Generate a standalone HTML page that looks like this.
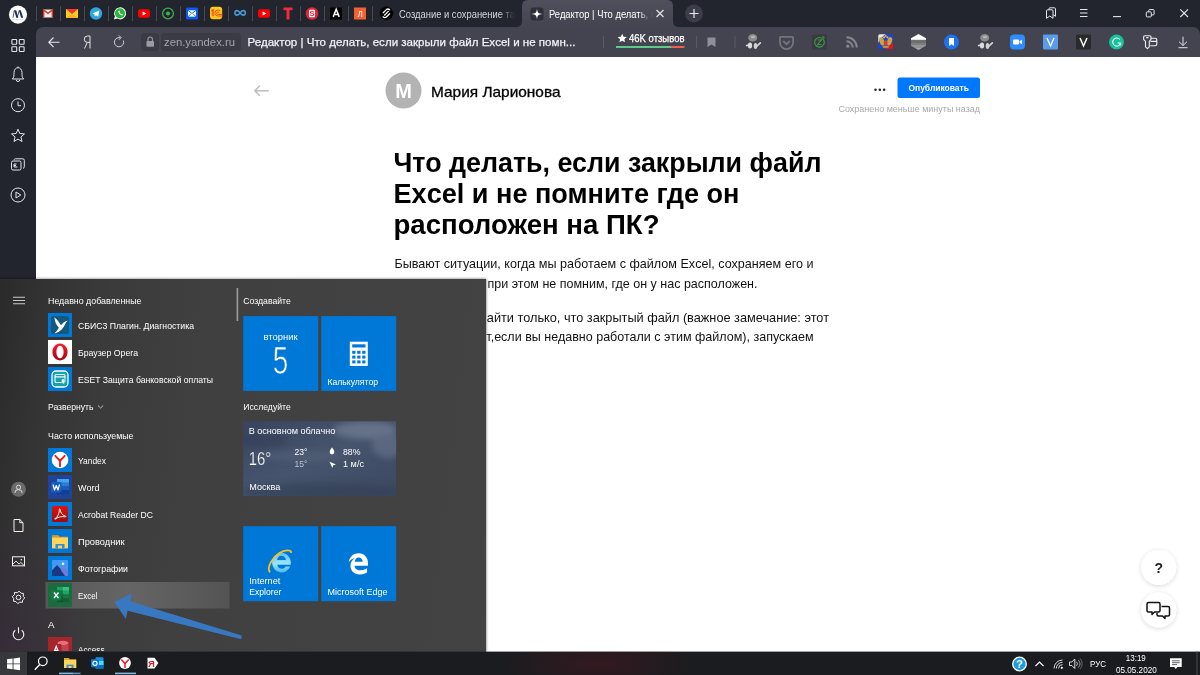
<!DOCTYPE html>
<html><head><meta charset="utf-8"><title>Редактор</title>
<style>
html,body{margin:0;padding:0;width:1200px;height:675px;overflow:hidden;background:#fff;font-family:"Liberation Sans", sans-serif;}
#root{position:relative;width:1200px;height:675px;overflow:hidden;}
.abs{position:absolute;}
svg text{font-family:"Liberation Sans", sans-serif;}
svg{will-change:transform;}

#tabbar{left:0;top:0;width:1200px;height:57px;background:#22242e;}
#side{left:0;top:27px;width:36px;height:252px;background:#22242e;}
#addr{left:36px;top:27px;width:1164px;height:30px;background:#43444f;border-radius:7px 7px 0 0;}
#page{left:36px;top:57px;width:1164px;height:595px;background:#fff;}
#start{left:0;top:279px;width:486px;height:373px;
 background:
  radial-gradient(ellipse 90px 140px at 0px 372px, rgba(58,34,66,.4), rgba(58,34,66,0) 100%),
  linear-gradient(97deg,#2a2a2a 0%,#343434 10%,#3b3b3b 22%,#404040 40%,#434343 100%);
 box-shadow:0 -1px 2px rgba(0,0,0,.22), 1px 0 2px rgba(0,0,0,.25);}
#taskbar{left:0;top:652px;width:1200px;height:23px;background:#191a1d;}

</style></head><body><div id="root">
<div id="tabbar" class="abs"></div><div id="side" class="abs"></div><div id="addr" class="abs"></div><div id="page" class="abs"></div><svg class="abs" style="left:0;top:0" width="1200" height="60" viewBox="0 0 1200 60"><rect x="36.0" y="6" width="1" height="15" fill="#474954"/><rect x="60.0" y="6" width="1" height="15" fill="#474954"/><rect x="84.0" y="6" width="1" height="15" fill="#474954"/><rect x="108.0" y="6" width="1" height="15" fill="#474954"/><rect x="132.0" y="6" width="1" height="15" fill="#474954"/><rect x="156.0" y="6" width="1" height="15" fill="#474954"/><rect x="180.0" y="6" width="1" height="15" fill="#474954"/><rect x="204.0" y="6" width="1" height="15" fill="#474954"/><rect x="228.0" y="6" width="1" height="15" fill="#474954"/><rect x="252.0" y="6" width="1" height="15" fill="#474954"/><rect x="276.0" y="6" width="1" height="15" fill="#474954"/><rect x="300.0" y="6" width="1" height="15" fill="#474954"/><rect x="324.0" y="6" width="1" height="15" fill="#474954"/><rect x="348.0" y="6" width="1" height="15" fill="#474954"/><rect x="372.0" y="6" width="1" height="15" fill="#474954"/><path d="M516 27 Q522 27 522 21 L522 6 Q522 0 528 0 L667 0 Q673 0 673 6 L673 21 Q673 27 679 27 Z" fill="url(#gtab)"/><defs><linearGradient id="gtab" x1="0" y1="0" x2="0" y2="1"><stop offset="0" stop-color="#4f505b"/><stop offset="1" stop-color="#43444f"/></linearGradient></defs><defs><linearGradient id="gfade1" gradientUnits="userSpaceOnUse" x1="399" y1="0" x2="516" y2="0"><stop offset="0" stop-color="#d6d7dc"/><stop offset="0.86" stop-color="#d6d7dc"/><stop offset="0.97" stop-color="#d6d7dc" stop-opacity="0.12"/><stop offset="1" stop-color="#d6d7dc" stop-opacity="0"/></linearGradient></defs><text x="399" y="17.5" font-size="10" fill="url(#gfade1)" font-weight="normal" text-anchor="start" textLength="116" lengthAdjust="spacingAndGlyphs" >Создание и сохранение та</text><defs><linearGradient id="gfade2" gradientUnits="userSpaceOnUse" x1="549" y1="0" x2="654" y2="0"><stop offset="0" stop-color="#fff"/><stop offset="0.86" stop-color="#fff"/><stop offset="0.96" stop-color="#fff" stop-opacity="0.12"/><stop offset="1" stop-color="#fff" stop-opacity="0"/></linearGradient></defs><text x="549" y="17.5" font-size="10" fill="url(#gfade2)" font-weight="normal" text-anchor="start" textLength="107" lengthAdjust="spacingAndGlyphs" >Редактор | Что делать, е</text><path d="M656.5 10 L663.5 17 M663.5 10 L656.5 17" stroke="#e8e8ec" stroke-width="1.1" fill="none"/><circle cx="694" cy="13.5" r="9" fill="#3c3d49"/><path d="M689.5 13.5 H698.5 M694 9 V18" stroke="#e8e8ec" stroke-width="1.2"/><rect x="141" y="33" width="18" height="18" rx="4" fill="#3a3b45"/><rect x="161" y="33" width="80" height="18" rx="4" fill="#3a3b45"/><text x="164" y="46.3" font-size="11.7" fill="#a4a5ad" font-weight="normal" text-anchor="start" textLength="71" lengthAdjust="spacingAndGlyphs" >zen.yandex.ru</text><text x="247.5" y="46.3" font-size="11.7" fill="#f2f2f4" font-weight="normal" text-anchor="start" textLength="328" lengthAdjust="spacingAndGlyphs" stroke="#f2f2f4" stroke-width="0.250">Редактор | Что делать, если закрыли файл Excel и не помн...</text><rect x="603" y="36" width="1" height="12" fill="#5a5b66"/><rect x="696" y="36" width="1" height="12" fill="#5a5b66"/><rect x="734.5" y="36" width="1" height="12" fill="#5a5b66"/><text x="629" y="42.2" font-size="10.3" fill="#ffffff" font-weight="normal" text-anchor="start" textLength="55.5" lengthAdjust="spacingAndGlyphs" stroke="#fff" stroke-width="0.250">46K отзывов</text><rect x="616" y="46" width="55" height="2" fill="#5fc98a"/><rect x="671" y="46" width="13.5" height="2" fill="#f0604d"/></svg><svg class="abs" style="left:0;top:0" width="1200" height="60" viewBox="0 0 1200 60"><circle cx="18" cy="14.600" r="9.100" fill="#fff"/><path d="M13 17.700 L14.300 10.400" stroke="#24365c" stroke-width="0.800" fill="none"/><path d="M14.200 10.300 L16.200 10.300 L18.300 17.700 L16.300 17.700 Z" fill="#1c2e52"/><path d="M17.300 17.700 L19.200 10.400" stroke="#24365c" stroke-width="0.800" fill="none"/><path d="M18.800 10.300 L20.700 10.300 L23.200 17.700 L21.100 17.700 Z" fill="#1c2e52"/><rect x="12.500" y="19" width="11" height="0.500" fill="#c5cde0"/><g transform="translate(0 -0.500)"><rect x="43" y="10" width="10" height="8" fill="#ececec"/><path d="M43.600 18 V10.500 L48 13.900 L52.400 10.500 V18" stroke="#d8382b" stroke-width="1.500" fill="none"/><rect x="66" y="9.500" width="12" height="9" fill="#fdc92c"/><path d="M66 9.500 H78 L72 14.500 Z" fill="#f5322d"/><path d="M66 18.500 L72 14 L78 18.500 Z" fill="#f9b31b"/><circle cx="96" cy="14" r="6.200" fill="#2ea6e0"/><path d="M92.500 14 L99.300 11 L98.200 17.300 L96 15.700 L94.800 17 L94.600 15 Z" fill="#fff"/><path d="M114 20 L114.900 16.800 A6 6 0 1 1 117.200 19.100 Z" fill="#fff"/><circle cx="120" cy="13.800" r="5.100" fill="#2cb742"/><path d="M118 11.500 c0.600 2.200 1.800 3.600 4 4.600 l1 -0.900 l-1.200 -0.900 l-0.600 0.400 c-0.800 -0.500 -1.300 -1.100 -1.700 -1.900 l0.500 -0.600 l-0.800 -1.300 z" fill="#fff"/><rect x="138" y="9.700" width="12" height="8.600" rx="2.300" fill="#ff0000"/><path d="M142.6 11.900 L146.4 14 L142.6 16.100 Z" fill="#fff"/><rect x="258" y="9.700" width="12" height="8.600" rx="2.300" fill="#ff0000"/><path d="M262.6 11.900 L266.4 14 L262.6 16.100 Z" fill="#fff"/><circle cx="168" cy="14" r="5.400" fill="none" stroke="#3fae52" stroke-width="1.300"/><circle cx="168" cy="14" r="2.100" fill="#3fae52"/><rect x="186" y="8" width="12" height="12" rx="1.500" fill="#0a5cf5"/><rect x="188" y="10.800" width="8" height="6.400" fill="#fff"/><path d="M188 10.800 L192 14 L196 10.800 M188 17.200 L190.800 14.500 M196 17.200 L193.200 14.500" stroke="#0a5cf5" stroke-width="0.900" fill="none"/><defs><linearGradient id="g1c" x1="0" y1="0" x2="0" y2="1"><stop offset="0" stop-color="#ffd21a"/><stop offset="0.5" stop-color="#fdb91c"/><stop offset="1" stop-color="#fcc81e"/></linearGradient></defs><rect x="210" y="7.200" width="12.200" height="12.500" rx="3" fill="url(#g1c)"/><path d="M211.500 11.500 L213 10.300 V16.500" stroke="#f0481c" stroke-width="1.300" fill="none"/><path d="M220 11.300 a3 3 0 1 0 -1.500 5.200 H222.200 M218.800 12.800 a1.300 1.300 0 1 0 -0.500 2.200 H222.200" stroke="#f0481c" stroke-width="0.900" fill="none"/><path d="M240.100 13.400 C238.300 10.600 235 10.200 234.900 13.400 C235 16.600 238.300 16.200 240.100 13.400 C241.900 10.600 245.200 10.200 245.300 13.400 C245.200 16.600 241.900 16.200 240.100 13.400 Z" fill="none" stroke="#4a9bdc" stroke-width="1.600"/><path d="M283.500 8 H292.500 V10.800 H289.500 V20 H286.500 V10.800 H283.500 Z" fill="#ee2c3c"/><circle cx="312" cy="14" r="6.300" fill="#e5263a"/><rect x="309" y="10.300" width="6" height="7.400" rx="1" fill="#fff"/><text x="312" y="16.8" font-size="7.5" fill="#e5263a" font-weight="bold" text-anchor="middle" >S</text><rect x="330" y="8" width="12" height="12" fill="#000"/><path d="M333.200 17.400 L336.200 9.800 L339.200 17.400 M334.500 14.900 H337.900" stroke="#fff" stroke-width="1.500" fill="none" stroke-linejoin="miter"/><rect x="354" y="8" width="12" height="12" fill="#f4602f"/><text x="360.2" y="17.3" font-size="8.5" fill="#fff" font-weight="normal" text-anchor="middle" textLength="5" lengthAdjust="spacingAndGlyphs" >Л</text><path d="M386.400 7.300 L391 9.200 L392.900 13.800 L391 18.400 L386.400 20.300 L381.800 18.400 L379.900 13.800 L381.800 9.200 Z" fill="#000" stroke="#000" stroke-width="1" stroke-linejoin="round"/><path d="M383.200 13.300 L386.400 10.100 Q388.100 8.800 389.700 10.300 M389.600 14.300 L386.400 17.500 Q384.700 18.800 383.100 17.300 M384.500 15.700 L388.300 11.900" stroke="#fff" stroke-width="1.250" fill="none" stroke-linecap="round"/></g><rect x="530.500" y="7.500" width="13" height="13" rx="3" fill="#2e2f39"/><path d="M537 8.500 C537.300 12.500 538.500 13.700 542.500 14 C538.500 14.300 537.300 15.500 537 19.500 C536.700 15.500 535.500 14.300 531.500 14 C535.500 13.700 536.700 12.500 537 8.500 Z" fill="#fff"/><g stroke="#e6e6ea" fill="none" stroke-width="1" transform="translate(-1.500 0.300)"><path d="M1048 18 v-7.500 a1 1 0 0 1 1 -1 h4.500 a1 1 0 0 1 1 1 v7.500 l-3.200 -2.300 z"/><path d="M1050.500 9.500 v-1 a1 1 0 0 1 1 -1 h4.500 a1 1 0 0 1 1 1 v7.500 l-2.300 -1.500" /></g><path d="M1080 9.500 h7.500 M1080 13 h7.500 M1080 16.500 h7.500" stroke="#e6e6ea" stroke-width="1"/><path d="M1113 16.600 h8" stroke="#e6e6ea" stroke-width="1.100"/><g stroke="#e6e6ea" fill="none" stroke-width="1"><rect x="1146.300" y="11.900" width="5" height="5" rx="0.800"/><path d="M1148.800 11.900 v-1.500 a0.800 0.800 0 0 1 0.800 -0.800 h3.700 a0.800 0.800 0 0 1 0.800 0.800 v3.700 a0.800 0.800 0 0 1 -0.800 0.800 h-2"/></g><path d="M1180.300 9.300 L1188 17 M1188 9.300 L1180.300 17" stroke="#e6e6ea" stroke-width="1.100"/><rect x="11.9" y="39.5" width="4.800" height="4.800" rx="0.700" fill="none" stroke="#e6e6ea" stroke-width="1.100"/><rect x="19.3" y="39.5" width="4.800" height="4.800" rx="0.700" fill="none" stroke="#e6e6ea" stroke-width="1.100"/><rect x="11.9" y="46.7" width="4.800" height="4.800" rx="0.700" fill="none" stroke="#e6e6ea" stroke-width="1.100"/><rect x="19.3" y="46.7" width="4.800" height="4.800" rx="0.700" fill="none" stroke="#e6e6ea" stroke-width="1.100"/><path d="M49 42.300 H59.500 M53.500 37.500 L48.800 42.300 L53.500 47" stroke="#e6e6ea" stroke-width="1.100" fill="none"/><path d="M90 36 V48.500 M90 36 H87.500 a3.200 3.200 0 0 0 0 6.400 H90 M87.300 42.400 L84.500 48.500" stroke="#e6e6ea" stroke-width="1" fill="none"/><path d="M123.300 40.500 a4.600 4.600 0 1 1 -4.300 -2.900 h1.500 M118.800 35.300 l2.300 2.300 l-2.300 2.300" stroke="#d0d0d6" stroke-width="1" fill="none"/><rect x="146.500" y="41" width="7.500" height="5.800" rx="0.800" fill="#9a9ba3"/><path d="M148 41 v-1.800 a2.200 2.200 0 0 1 4.400 0 v1.800" stroke="#9a9ba3" stroke-width="1.100" fill="none"/><path d="M622.200 33.800 l1.350 2.900 l3.150 0.350 l-2.350 2.150 l0.650 3.100 l-2.800 -1.600 l-2.800 1.600 l0.650 -3.100 l-2.350 -2.150 l3.150 -0.350 z" fill="#fff"/><path d="M707.500 37.500 h8 v9.500 l-4 -2.500 l-4 2.500 z" fill="#8e8f97"/><defs><filter id="fblur" x="-20%" y="-20%" width="140%" height="140%"><feGaussianBlur stdDeviation="0.350"/></filter></defs><g transform="translate(753 42)" filter="url(#fblur)"><ellipse cx="-0.300" cy="-4.200" rx="4.500" ry="3.800" fill="#8c8c8c"/><ellipse cx="0" cy="-5" rx="2.200" ry="1.300" fill="#b5b5b5"/><ellipse cx="-3" cy="3.500" rx="2.200" ry="3" fill="#dadada"/><ellipse cx="2.500" cy="4" rx="1.800" ry="3" fill="#cfcfcf"/><path d="M3.500 4.500 L7.300 0.800" stroke="#d8d8d8" stroke-width="1.700" stroke-linecap="round"/><path d="M-6.300 3.500 L-3.500 3" stroke="#dedede" stroke-width="1.600" stroke-linecap="round"/><path d="M-0.500 1 L-0.500 6" stroke="#43444f" stroke-width="0.600"/></g><g transform="translate(985 42)" filter="url(#fblur)"><ellipse cx="-0.300" cy="-4.200" rx="4.500" ry="3.800" fill="#8c8c8c"/><ellipse cx="0" cy="-5" rx="2.200" ry="1.300" fill="#b5b5b5"/><ellipse cx="-3" cy="3.500" rx="2.200" ry="3" fill="#dadada"/><ellipse cx="2.500" cy="4" rx="1.800" ry="3" fill="#cfcfcf"/><path d="M3.500 4.500 L7.300 0.800" stroke="#d8d8d8" stroke-width="1.700" stroke-linecap="round"/><path d="M-6.300 3.500 L-3.500 3" stroke="#dedede" stroke-width="1.600" stroke-linecap="round"/><path d="M-0.500 1 L-0.500 6" stroke="#43444f" stroke-width="0.600"/></g><path d="M780.900 36.900 h11.200 a1 1 0 0 1 1 1 v4.400 a6.600 6.800 0 0 1 -13.200 0 v-4.400 a1 1 0 0 1 1 -1 z" fill="none" stroke="#74747a" stroke-width="1.800"/><path d="M783.200 41 L786.500 44.200 L789.800 41" fill="none" stroke="#74747a" stroke-width="1.800"/><rect x="812" y="34.500" width="15" height="15" fill="#3a3b41"/><circle cx="819.500" cy="42.300" r="4.800" fill="none" stroke="#3c9a4c" stroke-width="1.100"/><path d="M817.600 40 H821.500 L817.600 44.600 H821.500 M816.300 46.300 L823.300 37.300 M822.300 36.800 h1.700 v1.700" stroke="#3c9a4c" stroke-width="0.900" fill="none"/><g fill="none" stroke="#85868d" stroke-width="2"><path d="M846.500 37.200 a10.300 10.300 0 0 1 10.300 10.300"/><path d="M846.500 41.300 a6.200 6.200 0 0 1 6.200 6.200"/></g><circle cx="847.800" cy="46.200" r="1.600" fill="#85868d"/><defs><clipPath id="ccoa"><rect x="878.250" y="34.250" width="14.750" height="15" rx="1.500"/></clipPath></defs><g clip-path="url(#ccoa)"><rect x="878" y="34" width="15.500" height="15.500" fill="#1846d2"/><path d="M878 34 h8 q-5 3 -8 9 z" fill="#ece7d8"/><path d="M893.500 49.500 v-6.500 q-5 1.500 -8 6.500 z" fill="#e3151a"/><g filter="url(#fblur)"><ellipse cx="881.800" cy="41.300" rx="2.300" ry="4.300" transform="rotate(-18 881.800 41.300)" fill="#c9a548"/><ellipse cx="889.600" cy="41.300" rx="2.300" ry="4.300" transform="rotate(18 889.600 41.300)" fill="#c9a548"/><circle cx="884" cy="37.300" r="1.100" fill="#d9b856"/><circle cx="887.400" cy="37.300" r="1.100" fill="#d9b856"/><circle cx="885.700" cy="36" r="0.900" fill="#d9b856"/><ellipse cx="885.700" cy="46.800" rx="3.300" ry="1.400" fill="#b8923a"/><ellipse cx="885.700" cy="42.800" rx="1.900" ry="2.800" fill="#dc3a30"/></g></g><defs><clipPath id="chex"><path d="M918.500 34 L926 38.200 V45.800 L918.500 50 L911 45.800 V38.200 Z"/></clipPath></defs><g clip-path="url(#chex)"><rect x="910" y="33" width="17" height="7" fill="#fff"/><rect x="910" y="39.800" width="17" height="2.800" fill="#6f6f6f"/><rect x="910" y="42.500" width="17" height="2.700" fill="#7e7e7e"/><rect x="910" y="45" width="17" height="2.600" fill="#959595"/><rect x="910" y="47.500" width="17" height="3" fill="#adadad"/></g><circle cx="951.500" cy="42" r="7.500" fill="#1a73f0"/><path d="M949 38 h5 v8 l-2.500 -1.800 l-2.500 1.800 z" fill="#fff"/><rect x="1010" y="34.500" width="15" height="15" rx="4" fill="#2d8cff"/><rect x="1013" y="39.500" width="6" height="5" rx="1" fill="#fff"/><path d="M1019.500 41.300 L1022 39.800 V44.200 L1019.500 42.700 Z" fill="#fff"/><rect x="1043" y="34.500" width="15" height="15" rx="1" fill="#5a9bea"/><path d="M1047 38 L1050.500 46 L1054 38" stroke="#fff" stroke-width="1.300" fill="none"/><rect x="1076" y="34.500" width="15" height="15" rx="1" fill="#2a2a2a"/><path d="M1080 38 L1083.500 46 L1087 38" stroke="#fff" stroke-width="1.500" fill="none"/><circle cx="1116.500" cy="42" r="7.500" fill="#15c39a"/><path d="M1119.800 39.500 a4 4 0 1 0 0.800 3.500 h-2.800 M1120.600 43 v2.500" stroke="#fff" stroke-width="1.100" fill="none"/><g stroke="#ececf0" fill="none" stroke-width="1.100" stroke-linejoin="round"><path d="M1144.800 35.800 h5 a1.200 1.200 0 0 1 1.200 1.200 v2.300 l-1.700 2 v5.500 l-1.900 1.800 l-1.900 -1.800 v-5.500 l-1.900 -2 v-2.300 a1.200 1.200 0 0 1 1.200 -1.200 z M1146.200 37.600 h2.300"/><path d="M1150.800 38.300 h4.500 a1.500 1.500 0 0 1 1.500 1.500 v4.500 a1.500 1.500 0 0 1 -1.500 1.500 h-5 M1150.500 41.400 h6.300"/></g><path d="M1183 36.700 V45.300 M1179 41.700 L1183 45.500 L1187 41.700 M1178.500 47.700 H1187.500" stroke="#e0e0e4" stroke-width="1" fill="none"/></svg><svg class="abs" style="left:0;top:60px" width="36" height="219" viewBox="0 60 36 219"><path d="M12.300 79 c1.800 -1.500 1.700 -3.500 1.700 -6.500 a4 4.800 0 0 1 8 0 c0 3 -0.100 5 1.700 6.500 z M16.300 79.800 a1.700 1.700 0 0 0 3.400 0 M18 67.700 v-1.300" stroke="#e6e6ea" fill="none" stroke-width="1" stroke-linejoin="round"/><circle cx="18" cy="105.200" r="6.500" stroke="#e6e6ea" fill="none" stroke-width="1"/><path d="M18 101.500 V105.700 H21" stroke="#e6e6ea" fill="none" stroke-width="1"/><path d="M18.00 129.20 L19.82 133.49 L24.47 133.90 L20.95 136.96 L22.00 141.50 L18.00 139.10 L14.00 141.50 L15.05 136.96 L11.53 133.90 L16.18 133.49 Z" stroke="#e6e6ea" fill="none" stroke-width="1" stroke-linejoin="round"/><rect x="11.500" y="161" width="9.500" height="9" rx="1.500" stroke="#e6e6ea" fill="none" stroke-width="1"/><path d="M14 159.800 a1.500 1.500 0 0 1 1.300 -1 h7.500 a1.500 1.500 0 0 1 1.500 1.500 v6.500 a1.500 1.500 0 0 1 -1.300 1.500 M16.500 164 h-2.500 v3 h3.500 M14 165.500 h2" stroke="#e6e6ea" fill="none" stroke-width="1"/><circle cx="18" cy="195" r="7" stroke="#e6e6ea" fill="none" stroke-width="1"/><path d="M16 192 L20.800 195 L16 198 Z" stroke="#e6e6ea" fill="none" stroke-width="1" stroke-linejoin="round"/></svg><svg class="abs" style="left:0;top:57px" width="1200" height="594" viewBox="0 57 1200 594"><path d="M254.800 90.750 H268.700 M259.800 85.700 L254.800 90.750 L259.800 95.800" stroke="#bdbdbd" stroke-width="1.500" fill="none"/><circle cx="403.5" cy="90.5" r="18" fill="#b3b3b3"/><text x="403.5" y="97.5" font-size="20" fill="#ffffff" font-weight="bold" text-anchor="middle" >М</text><text x="431" y="96.5" font-size="15" fill="#000" font-weight="normal" text-anchor="start" textLength="129.5" lengthAdjust="spacingAndGlyphs" stroke="#000" stroke-width="0.3">Мария Ларионова</text><circle cx="875.5" cy="89.700" r="1.250" fill="#222"/><circle cx="879.800" cy="89.700" r="1.250" fill="#222"/><circle cx="884.100" cy="89.700" r="1.250" fill="#222"/><rect x="897.5" y="77.5" width="82.5" height="20.5" rx="2.5" fill="#0077ff"/><text x="938.7" y="91" font-size="9.5" fill="#fff" font-weight="bold" text-anchor="middle" textLength="60.5" lengthAdjust="spacingAndGlyphs" >Опубликовать</text><text x="838.5" y="111.5" font-size="8.8" fill="#a8a8a8" font-weight="normal" text-anchor="start" textLength="141.5" lengthAdjust="spacingAndGlyphs" >Сохранено меньше минуты назад</text><text x="393.5" y="172" font-size="28" fill="#000" font-weight="bold" text-anchor="start" textLength="428" lengthAdjust="spacingAndGlyphs" >Что делать, если закрыли файл</text><text x="393.5" y="203" font-size="28" fill="#000" font-weight="bold" text-anchor="start" textLength="346" lengthAdjust="spacingAndGlyphs" >Excel и не помните где он</text><text x="393.5" y="234" font-size="28" fill="#000" font-weight="bold" text-anchor="start" textLength="266" lengthAdjust="spacingAndGlyphs" >расположен на ПК?</text><text x="394.5" y="268" font-size="13.5" fill="#111" font-weight="normal" text-anchor="start" textLength="419" lengthAdjust="spacingAndGlyphs" >Бывают ситуации, когда мы работаем с файлом Excel, сохраняем его и</text><text x="487.5" y="287.5" font-size="13.5" fill="#111" font-weight="normal" text-anchor="start" textLength="270" lengthAdjust="spacingAndGlyphs" >при этом не помним, где он у нас расположен.</text><text x="486.8" y="321.7" font-size="13.5" fill="#111" font-weight="normal" text-anchor="start" textLength="342.2" lengthAdjust="spacingAndGlyphs" >айти только, что закрытый файл (важное замечание: этот</text><text x="486.3" y="341.2" font-size="13.5" fill="#111" font-weight="normal" text-anchor="start" textLength="327.3" lengthAdjust="spacingAndGlyphs" >т,если вы недавно работали с этим файлом), запускаем</text><defs><filter id="fsh" x="-30%" y="-30%" width="160%" height="160%"><feGaussianBlur in="SourceAlpha" stdDeviation="2.5"/><feOffset dy="1"/><feComponentTransfer><feFuncA type="linear" slope="0.16"/></feComponentTransfer><feMerge><feMergeNode/><feMergeNode in="SourceGraphic"/></feMerge></filter></defs><circle cx="1158.7" cy="567.5" r="17.5" fill="#fff" filter="url(#fsh)"/><circle cx="1158.7" cy="610" r="17.5" fill="#fff" filter="url(#fsh)"/><text x="1158.7" y="572.5" font-size="14" fill="#222" font-weight="bold" text-anchor="middle" >?</text><path d="M1148.5 602.5 h10 a1.5 1.5 0 0 1 1.5 1.5 v6.5 a1.5 1.5 0 0 1 -1.5 1.5 h-4 l-2.5 2.5 v-2.5 h-3.5 a1.5 1.5 0 0 1 -1.5 -1.5 v-6.500 a1.5 1.5 0 0 1 1.500 -1.500 z" fill="#fff" stroke="#111" stroke-width="1.5" stroke-linejoin="round"/><path d="M1161.5 606.500 h6.500 a1.5 1.5 0 0 1 1.5 1.5 v6.500 a1.5 1.5 0 0 1 -1.5 1.5 h-3 v2.500 l-2.500 -2.500 h-4 a1.5 1.5 0 0 1 -1.5 -1.5 v-1.500" fill="none" stroke="#111" stroke-width="1.5" stroke-linejoin="round"/></svg><div id="start" class="abs"></div><svg class="abs" style="left:0;top:270px" width="500" height="381" viewBox="0 270 500 381"><defs>
<linearGradient id="ghl" x1="0" y1="0" x2="1" y2="0"><stop offset="0" stop-color="#575757"/><stop offset="0.45" stop-color="#656565"/><stop offset="1" stop-color="#545454"/></linearGradient>
<linearGradient id="gacro" x1="0" y1="0" x2="0" y2="1"><stop offset="0" stop-color="#e01410"/><stop offset="1" stop-color="#9c0b09"/></linearGradient>
<linearGradient id="gopera" x1="0" y1="0" x2="0" y2="1"><stop offset="0" stop-color="#ff1b2d"/><stop offset="1" stop-color="#a70014"/></linearGradient>
<linearGradient id="gphoto" x1="0" y1="0" x2="0" y2="1"><stop offset="0" stop-color="#3d9bf2"/><stop offset="1" stop-color="#5a8ff0"/></linearGradient>
<linearGradient id="gweather" x1="0" y1="0" x2="1" y2="1"><stop offset="0" stop-color="#39455e"/><stop offset="0.5" stop-color="#47546d"/><stop offset="1" stop-color="#3c4861"/></linearGradient>
<filter id="blur3"><feGaussianBlur stdDeviation="3"/></filter>
<filter id="blur1"><feGaussianBlur stdDeviation="0.6"/></filter>
<clipPath id="cweather"><rect x="243.200" y="421.300" width="153" height="74.700"/></clipPath>
<clipPath id="cstart"><rect x="0" y="279" width="486" height="372.600"/></clipPath>
</defs><rect x="13" y="296.8" width="12" height="0.800" fill="#f0f0f0"/><rect x="13" y="300.1" width="12" height="0.800" fill="#f0f0f0"/><rect x="13" y="303.40000000000003" width="12" height="0.800" fill="#f0f0f0"/><rect x="236.6" y="288" width="1.6" height="33" fill="#9c9c9c"/><text x="48" y="303.5" font-size="9.2" fill="#fff" font-weight="normal" text-anchor="start" textLength="93.5" lengthAdjust="spacingAndGlyphs" >Недавно добавленные</text><text x="48" y="410.3" font-size="9.2" fill="#fff" font-weight="normal" text-anchor="start" textLength="45.5" lengthAdjust="spacingAndGlyphs" >Развернуть</text><path d="M98 405.500 L100.600 408 L103.200 405.500" stroke="#ddd" stroke-width="0.8" fill="none"/><text x="48" y="438.5" font-size="9.2" fill="#fff" font-weight="normal" text-anchor="start" textLength="85.5" lengthAdjust="spacingAndGlyphs" >Часто используемые</text><text x="48" y="628" font-size="9.7" fill="#fff" font-weight="normal" text-anchor="start" textLength="6.5" lengthAdjust="spacingAndGlyphs" >A</text><rect x="45.5" y="582" width="184" height="26.500" fill="url(#ghl)"/><g clip-path="url(#cstart)"><rect x="48" y="313" width="24" height="24" fill="#0078d7"/><rect x="51" y="316" width="18" height="18" rx="2.5" fill="#14587c"/><path d="M54.300 317.3 C57 319.5 59.500 322.5 61 325.3 C62.500 323 65 321 67.700 320.5 C66 322.5 64.800 325 63.300 327.5 C61 330.8 57.500 332.8 54.300 333.5 C56.500 331.5 58 329.5 58.800 327.5 C56.300 325.5 54.800 321.5 54.300 317.3 Z" fill="#fff"/><text x="78" y="328.8" font-size="9.2" fill="#fff" font-weight="normal" text-anchor="start" textLength="116" lengthAdjust="spacingAndGlyphs" >СБИС3 Плагин. Диагностика</text><rect x="48" y="340" width="24" height="24" fill="#ffffff"/><path fill-rule="evenodd" d="M60 343.5 a7.600 8.500 0 1 0 0.010 0 Z M60 345.7 a3.600 6.300 0 1 1 -0.010 0 Z" fill="url(#gopera)"/><text x="78" y="355.8" font-size="9.2" fill="#fff" font-weight="normal" text-anchor="start" textLength="60" lengthAdjust="spacingAndGlyphs" >Браузер Opera</text><rect x="48" y="367" width="24" height="24" fill="#0078d7"/><rect x="52" y="371" width="16" height="16" rx="4" fill="#12a3ad" stroke="#fff" stroke-width="1.300"/><rect x="55" y="374.5" width="10" height="8" rx="1.300" fill="none" stroke="#fff" stroke-width="1.100"/><rect x="55" y="376.3" width="10" height="1.200" fill="#fff"/><path d="M61.500 379 h3.500 v2.500 q-0.500 2 -1.750 2.500 q-1.250 -0.500 -1.750 -2.500 z" fill="#fff" stroke="#12a3ad" stroke-width="0.600"/><text x="78" y="382.8" font-size="9.2" fill="#fff" font-weight="normal" text-anchor="start" textLength="135" lengthAdjust="spacingAndGlyphs" >ESET Защита банковской оплаты</text><rect x="48" y="448" width="24" height="24" fill="#0078d7"/><circle cx="60" cy="460" r="8.300" fill="#fff"/><path d="M55.300 455.8 L60 460.8 L64.700 455.8 M60 460.5 V466.3" stroke="#e61e25" stroke-width="1.900" fill="none" stroke-linecap="round"/><text x="78" y="463.8" font-size="9.2" fill="#fff" font-weight="normal" text-anchor="start" textLength="28" lengthAdjust="spacingAndGlyphs" >Yandex</text><rect x="48" y="475" width="24" height="24" fill="#1e439b"/><rect x="57" y="479.0" width="12" height="3.850" fill="#41a5ee"/><rect x="57" y="482.75" width="12" height="3.850" fill="#2b7cd3"/><rect x="57" y="486.5" width="12" height="3.850" fill="#185abd"/><rect x="57" y="490.25" width="12" height="3.850" fill="#103f91"/><rect x="51" y="482" width="10.500" height="10.500" rx="1" fill="#185abd"/><path d="M53 484.5 L54.500 490 L56.250 485.5 L58 490 L59.500 484.5" stroke="#fff" stroke-width="1.200" fill="none" stroke-linejoin="round"/><text x="78" y="490.8" font-size="9.2" fill="#fff" font-weight="normal" text-anchor="start" textLength="21.5" lengthAdjust="spacingAndGlyphs" >Word</text><rect x="48" y="502" width="24" height="24" fill="#0078d7"/><rect x="52" y="506" width="16" height="16" rx="1.800" fill="url(#gacro)"/><path d="M55 518.5 C57.500 517.5 59.500 513 59.300 509.5 C59.200 508.5 60.300 508.5 60.300 509.8 C60.300 512.5 62.500 515.5 65.300 516 C66.200 516.2 66 517 65 516.8 C62 516.2 58.500 516.8 55.500 519 C54.800 519.5 54.300 518.8 55 518.5 Z" fill="none" stroke="#fff" stroke-width="0.950"/><text x="78" y="517.8" font-size="9.2" fill="#fff" font-weight="normal" text-anchor="start" textLength="75" lengthAdjust="spacingAndGlyphs" >Acrobat Reader DC</text><rect x="48" y="529" width="24" height="24" fill="#0078d7"/><path d="M52 535.3 h6.200 l1.200 1.500 h8.600 v11.500 h-16 z" fill="#e9a52b"/><rect x="52" y="535.3" width="6.500" height="1.300" fill="#d88f1c"/><rect x="52" y="537.8" width="16" height="10.500" fill="#ffd55c"/><path d="M55.500 548.3 v-4.300 h9 v4.300 z" fill="#3a8ad8"/><rect x="58" y="545.6" width="4" height="2.700" fill="#ffd55c"/><text x="78" y="544.8" font-size="9.2" fill="#fff" font-weight="normal" text-anchor="start" textLength="46.5" lengthAdjust="spacingAndGlyphs" >Проводник</text><rect x="48" y="556" width="24" height="24" fill="#0078d7"/><rect x="52" y="560" width="16" height="16" rx="1" fill="url(#gphoto)"/><path d="M52 576 v-5.500 l5 -5.500 l7.500 8 l3.500 3 z" fill="#16397f"/><path d="M60.500 569.8 l3 -2.600 l4.500 4.300 v4.500 h-3 z" fill="#6f79dd"/><circle cx="63" cy="563.8" r="1.300" fill="#fff"/><text x="78" y="571.8" font-size="9.2" fill="#fff" font-weight="normal" text-anchor="start" textLength="50" lengthAdjust="spacingAndGlyphs" >Фотографии</text><rect x="48" y="583" width="24" height="24" fill="#1a6b3e"/><rect x="57" y="587.0" width="6" height="3.850" fill="#21a366"/><rect x="63" y="587.0" width="6" height="3.850" fill="#33c481"/><rect x="57" y="590.75" width="6" height="3.850" fill="#107c41"/><rect x="63" y="590.75" width="6" height="3.850" fill="#21a366"/><rect x="57" y="594.5" width="6" height="3.850" fill="#185c37"/><rect x="63" y="594.5" width="6" height="3.850" fill="#107c41"/><rect x="57" y="598.25" width="6" height="3.850" fill="#144f2f"/><rect x="63" y="598.25" width="6" height="3.850" fill="#185c37"/><rect x="51" y="590" width="10.500" height="10.500" rx="1" fill="#107c41"/><path d="M54 592.5 L58.500 598 M58.500 592.5 L54 598" stroke="#fff" stroke-width="1.400" fill="none"/><text x="78" y="598.8" font-size="9.2" fill="#fff" font-weight="normal" text-anchor="start" textLength="19.5" lengthAdjust="spacingAndGlyphs" >Excel</text><rect x="48" y="637" width="24" height="24" fill="#a4262c"/><ellipse cx="63" cy="643" rx="5.500" ry="2.200" fill="#e8707a"/><path d="M57.500 643 v10 a5.500 2.200 0 0 0 11 0 v-10 a5.500 2.200 0 0 1 -11 0" fill="#c4424f"/><rect x="51" y="644" width="10.500" height="10.500" rx="1" fill="#a4262c"/><path d="M53.800 652.3 L56.250 646.3 L58.700 652.3 M54.700 650.3 H57.800" stroke="#fff" stroke-width="1.200" fill="none"/><text x="78" y="652.8" font-size="9.2" fill="#fff" font-weight="normal" text-anchor="start" textLength="26.5" lengthAdjust="spacingAndGlyphs" >Access</text></g><circle cx="18.500" cy="489.200" r="7.500" fill="#6b6b6b"/><circle cx="18.500" cy="487.300" r="2.100" fill="none" stroke="#e8e8e8" stroke-width="0.900"/><path d="M14.800 493 a3.700 3.400 0 0 1 7.400 0" fill="none" stroke="#e8e8e8" stroke-width="0.900"/><path d="M14 519.500 h5.800 l3.200 3.200 v8.800 h-9 z M19.800 519.500 v3.200 h3.200" fill="none" stroke="#f2f2f2" stroke-width="1"/><rect x="12.500" y="556.800" width="12" height="9" fill="none" stroke="#f2f2f2" stroke-width="1"/><path d="M12.500 564.500 l3.500 -3.500 l3 3 l1.800 -1.500 l3.700 3.300" fill="none" stroke="#f2f2f2" stroke-width="0.900"/><circle cx="21.300" cy="559.700" r="0.800" fill="#f2f2f2"/><path d="M24.77 598.01 L22.57 600.12 L22.51 602.26 L19.46 602.21 L17.89 603.67 L15.78 601.47 L13.64 601.41 L13.69 598.36 L12.23 596.79 L14.43 594.68 L14.49 592.54 L17.54 592.59 L19.11 591.13 L21.22 593.33 L23.36 593.39 L23.31 596.44 Z" fill="none" stroke="#f2f2f2" stroke-width="1" stroke-linejoin="round"/><circle cx="18.500" cy="597.400" r="2.300" fill="none" stroke="#f2f2f2" stroke-width="1"/><path d="M15.300 630.200 a5.300 5.300 0 1 0 6.400 0" fill="none" stroke="#f2f2f2" stroke-width="1.100"/><path d="M18.500 627.300 v6" stroke="#f2f2f2" stroke-width="1.100"/><text x="243.3" y="304" font-size="9.2" fill="#fff" font-weight="normal" text-anchor="start" textLength="47.5" lengthAdjust="spacingAndGlyphs" >Создавайте</text><text x="243.3" y="409.5" font-size="9.2" fill="#fff" font-weight="normal" text-anchor="start" textLength="47.5" lengthAdjust="spacingAndGlyphs" >Исследуйте</text><rect x="243.200" y="316.100" width="75" height="74.800" fill="#0078d7"/><rect x="321.200" y="316.100" width="75" height="74.800" fill="#0078d7"/><text x="280.5" y="340" font-size="9.5" fill="#fff" font-weight="normal" text-anchor="middle" textLength="34" lengthAdjust="spacingAndGlyphs" >вторник</text><text x="280.5" y="374.2" font-size="38.5" fill="#fff" font-weight="normal" text-anchor="middle" textLength="15.5" lengthAdjust="spacingAndGlyphs" stroke="#0078d7" stroke-width="0.700">5</text><rect x="349.800" y="341.700" width="18" height="24.200" fill="#fff"/><rect x="352.200" y="344.300" width="13.300" height="3.200" fill="#0078d7"/><rect x="352.20" y="350.80" width="3.300" height="3" fill="#0078d7"/><rect x="357.20" y="350.80" width="3.300" height="3" fill="#0078d7"/><rect x="362.20" y="350.80" width="3.300" height="3" fill="#0078d7"/><rect x="352.20" y="355.60" width="3.300" height="3" fill="#0078d7"/><rect x="357.20" y="355.60" width="3.300" height="3" fill="#0078d7"/><rect x="362.20" y="355.60" width="3.300" height="3" fill="#0078d7"/><rect x="352.20" y="360.40" width="3.300" height="3" fill="#0078d7"/><rect x="357.20" y="360.40" width="3.300" height="3" fill="#0078d7"/><rect x="362.20" y="360.40" width="3.300" height="3" fill="#0078d7"/><text x="327.5" y="385" font-size="9.2" fill="#fff" font-weight="normal" text-anchor="start" textLength="50.5" lengthAdjust="spacingAndGlyphs" >Калькулятор</text><g clip-path="url(#cweather)"><rect x="243" y="421" width="153" height="75" fill="url(#gweather)"/><g filter="url(#blur3)" opacity="0.600"><ellipse cx="365" cy="430" rx="32" ry="9" fill="#7a879d"/><ellipse cx="388" cy="446" rx="16" ry="12" fill="#6a778f"/><ellipse cx="300" cy="456" rx="45" ry="5" fill="#56637c"/><ellipse cx="262" cy="440" rx="25" ry="8" fill="#34405a"/><ellipse cx="320" cy="492" rx="80" ry="9" fill="#333f57"/></g></g><text x="248.7" y="434" font-size="9.2" fill="#fff" font-weight="normal" text-anchor="start" textLength="86.5" lengthAdjust="spacingAndGlyphs" >В основном облачно</text><text x="248.7" y="465" font-size="18.3" fill="#fff" font-weight="normal" text-anchor="start" textLength="22.5" lengthAdjust="spacingAndGlyphs" stroke="#46536c" stroke-width="0.250">16°</text><text x="294.5" y="454.5" font-size="9.2" fill="#fff" font-weight="normal" text-anchor="start" textLength="13" lengthAdjust="spacingAndGlyphs" >23°</text><text x="294.5" y="466.8" font-size="9.2" fill="#b9c1d0" font-weight="normal" text-anchor="start" textLength="13" lengthAdjust="spacingAndGlyphs" >15°</text><path d="M332 447.300 c1.300 2 2.300 3.300 2.300 4.800 a2.300 2.300 0 0 1 -4.600 0 c0 -1.500 1 -2.800 2.300 -4.800 z" fill="#fff"/><text x="343" y="454.5" font-size="9.2" fill="#fff" font-weight="normal" text-anchor="start" textLength="17.5" lengthAdjust="spacingAndGlyphs" >88%</text><path d="M329.500 461.800 l6.500 2.700 l-2.800 0.800 l-0.800 2.800 z" fill="#fff"/><text x="343" y="467" font-size="9.2" fill="#fff" font-weight="normal" text-anchor="start" textLength="21" lengthAdjust="spacingAndGlyphs" >1 м/с</text><text x="249.3" y="490.3" font-size="9.2" fill="#fff" font-weight="normal" text-anchor="start" textLength="31" lengthAdjust="spacingAndGlyphs" >Москва</text><rect x="243.200" y="526.200" width="75" height="75" fill="#0078d7"/><rect x="321.200" y="526.200" width="75" height="75" fill="#0078d7"/><text x="249.3" y="583.5" font-size="9.2" fill="#fff" font-weight="normal" text-anchor="start" textLength="31" lengthAdjust="spacingAndGlyphs" >Internet</text><text x="249.3" y="595.3" font-size="9.2" fill="#fff" font-weight="normal" text-anchor="start" textLength="32" lengthAdjust="spacingAndGlyphs" >Explorer</text><text x="327.4" y="595.3" font-size="9.2" fill="#fff" font-weight="normal" text-anchor="start" textLength="60" lengthAdjust="spacingAndGlyphs" >Microsoft Edge</text><defs><linearGradient id="gie" x1="0" y1="0" x2="0" y2="1"><stop offset="0" stop-color="#5cc3f5"/><stop offset="0.55" stop-color="#9be4fb"/><stop offset="1" stop-color="#4db8ee"/></linearGradient></defs><g transform="translate(281.500 561.800) scale(1.040)"><path d="M-9 1.500 a9 9.300 0 1 1 17.800 1.300 h-12.800 a4.300 4.300 0 0 0 8 1.700 h4.300 a9 9.300 0 0 1 -17.300 -3 z M-4.200 -1.700 h8.400 a4.200 4.200 0 0 0 -8.400 0 z" fill="url(#gie)" fill-rule="evenodd"/><path d="M-11.500 9.500 C-14 5 -9 -4 -2 -8.300 C3.500 -11.800 8.500 -11.500 9.300 -9.300" fill="none" stroke="#f5c12a" stroke-width="1.800" stroke-linecap="round"/></g><g transform="translate(358.300 563.800) scale(0.920)"><path d="M-10.500 -1.500 C-9.500 -8 -5 -11.500 0.500 -11.500 C7 -11.500 10.500 -6.500 10.500 -1 V2 H-4 C-4 5 -1.500 7 2 7 C5 7 7.500 6 9.500 4.800 V9.500 C7 11 4.500 11.500 1.500 11.500 C-4.500 11.500 -8.500 7.500 -8.500 2 C-8.500 -1.500 -6.500 -4.500 -3.800 -6 C-7 -5.500 -9.500 -3.500 -10.500 -1.500 Z M-3.800 -2.300 H4.700 C4.700 -5 3 -6.800 0.500 -6.800 C-2 -6.800 -3.500 -4.800 -3.800 -2.300 Z" fill="#fff" fill-rule="evenodd"/></g><path d="M114.300 602.100 L131.700 593.500 L130.200 601.200 L241.700 635.600 L241.300 639.300 L127.600 610.700 L125.800 619 Z" fill="#3878c0"/></svg><div id="taskbar" class="abs"></div><svg class="abs" style="left:0;top:645px" width="1200" height="30" viewBox="0 645 1200 30"><rect x="0" y="651.600" width="1200" height="23.400" fill="#1b1c1f"/><defs><radialGradient id="gtb" gradientUnits="userSpaceOnUse" cx="598" cy="664" r="95" gradientTransform="translate(0 464.800) scale(1 0.300)"><stop offset="0" stop-color="#5a1522" stop-opacity="0.380"/><stop offset="1" stop-color="#5a1522" stop-opacity="0"/></radialGradient></defs><rect x="480" y="651.600" width="240" height="23.400" fill="url(#gtb)"/><rect x="0" y="651.600" width="27" height="23.400" fill="#37383b"/><path d="M7 659.300 L12.600 658.500 V663.400 H7 Z M13.500 658.400 L20 657.500 V663.400 H13.500 Z M7 664.300 H12.600 V669.200 L7 668.400 Z M13.500 664.300 H20 V670.200 L13.500 669.300 Z" fill="#fff"/><circle cx="42.800" cy="661.300" r="4.300" fill="none" stroke="#fff" stroke-width="1.200"/><path d="M39.800 664.500 L34.800 669.800" stroke="#fff" stroke-width="1.300"/><path d="M64 658 h4.800 l1 1.200 h6.400 v8.800 h-12.200 z" fill="#e9a52b"/><rect x="64" y="660" width="12.200" height="8" fill="#ffd55c"/><path d="M66.500 668 v-3.300 h7 v3.300 z" fill="#3a8ad8"/><rect x="68.500" y="666" width="3" height="2" fill="#ffd55c"/><rect x="59" y="672.600" width="14" height="1.600" fill="#76b9ed"/><rect x="73" y="672.600" width="7.500" height="1.600" fill="#5b8fb8"/><rect x="95.500" y="657.300" width="8" height="11.500" rx="0.800" fill="#1490df"/><rect x="99" y="661" width="4.500" height="4" fill="#50d9ff"/><rect x="95.500" y="665" width="8" height="3.800" fill="#0f6cbd"/><rect x="91" y="659.300" width="8" height="8" rx="0.800" fill="#0f78d4"/><circle cx="95" cy="663.300" r="2.100" fill="none" stroke="#fff" stroke-width="1.100"/><circle cx="125" cy="663" r="5.900" fill="#fff"/><path d="M121.700 660 L125 663.600 L128.300 660 M125 663.400 V667.500" stroke="#e61e25" stroke-width="1.500" fill="none" stroke-linecap="round"/><rect x="115" y="672.600" width="21" height="1.600" fill="#76b9ed"/><path d="M147.500 657.800 h7 l3.800 5.300 l-3.800 5.300 h-7 z" fill="#fff"/><text x="151.3" y="666.8" font-size="9.5" fill="#e61e25" font-weight="bold" text-anchor="middle" >Я</text><circle cx="1019.500" cy="664" r="6.800" fill="#1e9be0" stroke="#fff" stroke-width="1.300"/><text x="1019.5" y="668.3" font-size="11.5" fill="#fff" font-weight="bold" text-anchor="middle" >?</text><path d="M1035.500 666 L1039.500 662 L1043.500 666" stroke="#fff" stroke-width="1.100" fill="none"/><g fill="none" stroke="#d8d8d8" stroke-width="1"><path d="M1054 668.500 a8.500 8.500 0 0 1 8.500 -8.500"/><path d="M1056.300 668.500 a6.200 6.200 0 0 1 6.200 -6.200"/><path d="M1058.600 668.500 a3.900 3.900 0 0 1 3.900 -3.900"/></g><circle cx="1061.800" cy="667.800" r="1.100" fill="#fff"/><path d="M1069.500 662 h2.300 l3 -3 v9.500 l-3 -3 h-2.300 z" fill="none" stroke="#f0f0f0" stroke-width="0.900"/><path d="M1076.500 661.800 a2.800 2.800 0 0 1 0 4" fill="none" stroke="#f0f0f0" stroke-width="0.800"/><path d="M1078.300 660 a5 5 0 0 1 0 7.500" fill="none" stroke="#bdbdbd" stroke-width="0.800"/><path d="M1080 658.500 a7.500 7.500 0 0 1 0 10.500" fill="none" stroke="#777" stroke-width="0.800"/><text x="1090" y="666.6" font-size="9.2" fill="#fff" font-weight="normal" text-anchor="start" textLength="16" lengthAdjust="spacingAndGlyphs" >РУС</text><text x="1125.8" y="660.8" font-size="9.2" fill="#fff" font-weight="normal" text-anchor="start" textLength="20" lengthAdjust="spacingAndGlyphs" >13:19</text><text x="1116" y="672.5" font-size="9.2" fill="#fff" font-weight="normal" text-anchor="start" textLength="40.7" lengthAdjust="spacingAndGlyphs" >05.05.2020</text><path d="M1170 658.300 h11.700 v8.700 h-4.300 l-1.600 2 l-1.600 -2 h-4.200 z" fill="#fff"/><path d="M1172 660.800 h7.700 M1172 662.700 h7.700 M1172 664.600 h5" stroke="#1b1c1f" stroke-width="0.700"/><rect x="1196.500" y="651.500" width="1" height="23.500" fill="#4a4a4a"/></svg>
</div></body></html>
